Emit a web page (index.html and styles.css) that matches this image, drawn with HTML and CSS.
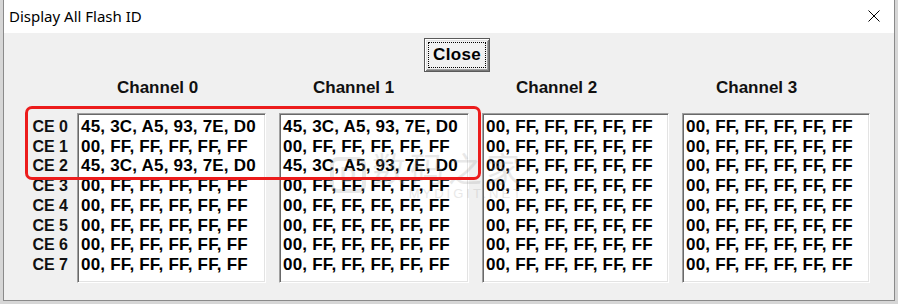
FILE: index.html
```html
<!DOCTYPE html>
<html lang="en">

<head>
	<meta charset="UTF-8">
	<title>Display All Flash ID</title>
	<link rel="stylesheet" href="styles.css">
</head>

<body>
	<div class="window">
		<div class="titlebar">
			<span class="title">Display All Flash ID</span>
			<svg class="close-x" width="12" height="12" viewBox="0 0 12 12">
				<path d="M0.5 0.5 L11.5 11.5 M11.5 0.5 L0.5 11.5" stroke="#000" stroke-width="1" fill="none" />
			</svg>
		</div>
		<div class="dialog">
			<div class="actions">
				<button class="btn"><span class="btn-label">Close</span></button>
			</div>
			<div class="row heads">
				<div class="labels"></div>
				<div class="cols">
					<div class="head first">Channel 0</div>
					<div class="head">Channel 1</div>
					<div class="head">Channel 2</div>
					<div class="head">Channel 3</div>
				</div>
			</div>
			<div class="row table">
				<div class="labels">
					<div>CE 0</div>
					<div>CE 1</div>
					<div>CE 2</div>
					<div>CE 3</div>
					<div>CE 4</div>
					<div>CE 5</div>
					<div>CE 6</div>
					<div>CE 7</div>
				</div>
				<div class="cols">
					<div class="box">
						<div>45, 3C, A5, 93, 7E, D0</div>
						<div>00, FF, FF, FF, FF, FF</div>
						<div>45, 3C, A5, 93, 7E, D0</div>
						<div>00, FF, FF, FF, FF, FF</div>
						<div>00, FF, FF, FF, FF, FF</div>
						<div>00, FF, FF, FF, FF, FF</div>
						<div>00, FF, FF, FF, FF, FF</div>
						<div>00, FF, FF, FF, FF, FF</div>
					</div>
					<div class="box">
						<div>45, 3C, A5, 93, 7E, D0</div>
						<div>00, FF, FF, FF, FF, FF</div>
						<div>45, 3C, A5, 93, 7E, D0</div>
						<div>00, FF, FF, FF, FF, FF</div>
						<div>00, FF, FF, FF, FF, FF</div>
						<div>00, FF, FF, FF, FF, FF</div>
						<div>00, FF, FF, FF, FF, FF</div>
						<div>00, FF, FF, FF, FF, FF</div>
					</div>
					<div class="box">
						<div>00, FF, FF, FF, FF, FF</div>
						<div>00, FF, FF, FF, FF, FF</div>
						<div>00, FF, FF, FF, FF, FF</div>
						<div>00, FF, FF, FF, FF, FF</div>
						<div>00, FF, FF, FF, FF, FF</div>
						<div>00, FF, FF, FF, FF, FF</div>
						<div>00, FF, FF, FF, FF, FF</div>
						<div>00, FF, FF, FF, FF, FF</div>
					</div>
					<div class="box">
						<div>00, FF, FF, FF, FF, FF</div>
						<div>00, FF, FF, FF, FF, FF</div>
						<div>00, FF, FF, FF, FF, FF</div>
						<div>00, FF, FF, FF, FF, FF</div>
						<div>00, FF, FF, FF, FF, FF</div>
						<div>00, FF, FF, FF, FF, FF</div>
						<div>00, FF, FF, FF, FF, FF</div>
						<div>00, FF, FF, FF, FF, FF</div>
					</div>
				</div>
			</div>
			<div class="watermark">
				<span class="wm-logo">D</span>
				<span class="wm-text">数码之家<small>MYDIGIT.NET</small></span>
			</div>
			<div class="callout"></div>
		</div>
	</div>
</body>

</html>
```

FILE: styles.css
```css
body {
	margin: 0;
	background: #d6d6d6;
	height: 304px;
	overflow: hidden;
	font-family: "Liberation Sans", Arial, sans-serif;
	color: #000;
}

.window {
	margin-left: 3px;
	width: 890px;
	border: 1px solid #8a8a8a;
	border-top: none;
	background: #f0f0f0;
}

.titlebar {
	display: flex;
	align-items: center;
	justify-content: space-between;
	height: 33px;
	background: #fff;
	padding: 0 14px 0 5px;
	box-sizing: border-box;
}

.title {
	font-family: "Noto Sans", sans-serif;
	font-size: 15px;
	color: #000;
	margin-top: -1px;
}

.close-x {
	margin-top: -2px;
}

.dialog {
	position: relative;
	height: 267px;
	padding-top: 5px;
	box-sizing: border-box;
}

.actions {
	padding-left: 420px;
}

.btn {
	display: block;
	width: 66px;
	height: 34px;
	padding: 3px;
	margin: 0;
	background: #f0f0f0;
	border: 1px solid #5a5a5a;
	box-shadow: inset 1px 1px 0 #fff, inset -1px -1px 0 #7a7a7a, inset 2px 2px 0 #e3e3e3, inset -2px -2px 0 #a0a0a0;
	box-sizing: border-box;
	font-family: inherit;
}

.btn-label {
	display: flex;
	align-items: center;
	justify-content: center;
	height: 100%;
	border: 1px dotted #000;
	box-sizing: border-box;
	font-size: 17px;
	font-weight: bold;
	color: #000;
	letter-spacing: 0.3px;
}

.row {
	display: flex;
}

.labels {
	width: 64px;
	margin-right: 9px;
	text-align: right;
	font-size: 16px;
	font-weight: bold;
	line-height: 19.7px;
	color: #111;
}

.cols {
	display: grid;
	grid-template-columns: 189px 190px 187px 188px;
	column-gap: 13px;
}

.heads {
	margin-top: 6px;
	height: 20px;
}

.head {
	padding-left: 34px;
	font-size: 17px;
	font-weight: bold;
	line-height: 20px;
	color: #111;
}

.head.first {
	padding-left: 40px;
}

.table {
	margin-top: 15px;
}

.table .labels {
	padding-top: 4px;
}

.box {
	height: 170px;
	box-sizing: border-box;
	background: #fff;
	border: 1px solid;
	border-color: #a0a0a0 #fff #fff #a0a0a0;
	box-shadow: inset 1px 1px 0 #696969, inset -1px -1px 0 #e3e3e3;
	padding: 3px 0 0 3px;
	font-size: 17px;
	font-weight: bold;
	line-height: 19.7px;
	letter-spacing: 0.2px;
	white-space: nowrap;
	overflow: hidden;
}

.watermark {
	position: absolute;
	left: 326px;
	top: 116px;
	display: flex;
	align-items: center;
	gap: 6px;
	opacity: 0.22;
	pointer-events: none;
}

.wm-logo {
	width: 36px;
	height: 36px;
	border: 4px solid #9a9a9a;
	border-radius: 8px;
	box-sizing: border-box;
	font-size: 22px;
	font-weight: bold;
	color: #9a9a9a;
	text-align: center;
	line-height: 28px;
}

.wm-text {
	display: flex;
	flex-direction: column;
	font-family: "Noto Sans CJK SC", sans-serif;
	font-size: 34px;
	line-height: 38px;
	letter-spacing: 4px;
	color: #9a9a9a;
}

.wm-text small {
	font-family: "Liberation Sans", sans-serif;
	font-size: 13px;
	line-height: 14px;
	letter-spacing: 3px;
	text-align: right;
}

.callout {
	position: absolute;
	left: 21px;
	top: 73px;
	width: 456px;
	height: 74px;
	box-sizing: border-box;
	border: 3px solid #ec1c1c;
	border-radius: 7px;
	pointer-events: none;
}
```
